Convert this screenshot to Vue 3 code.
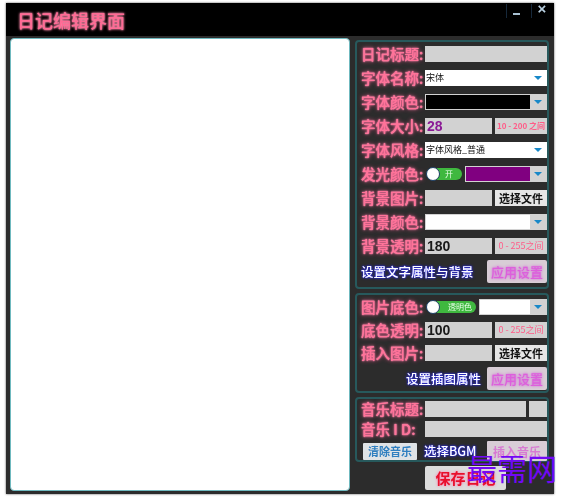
<script setup>
const title = '日记编辑界面'
</script>

<template>
  <div class="page">
    <div class="window">
      <header class="titlebar">
        <h1 class="title">{{ title }}</h1>
        <div class="controls">
          <span class="ctl min"></span>
          <span class="ctl close">×</span>
        </div>
      </header>
      <div class="body">
        <div class="editor"></div>
        <aside class="side">
          <section class="panel p1">
            <div class="row"><label>日记标题:</label><div class="field grow"></div></div>
            <div class="row"><label>字体名称:</label><div class="select grow"><span class="val">宋体</span><i class="arrow"></i></div></div>
            <div class="row"><label>字体颜色:</label><div class="cselect grow"><span class="swatch black"></span><i class="arrow"></i></div></div>
            <div class="row"><label>字体大小:</label><div class="field w67 num purple">28</div><div class="note boldnote">10 - 200 之间</div></div>
            <div class="row"><label>字体风格:</label><div class="select grow"><span class="val">字体风格_普通</span><i class="arrow"></i></div></div>
            <div class="row"><label>发光颜色:</label>
              <div class="toggle t1"><span class="knob"></span><span class="tlabel">开</span></div>
              <div class="cselect grow"><span class="swatch violet"></span><i class="arrow"></i></div>
            </div>
            <div class="row"><label>背景图片:</label><div class="field w67"></div><button class="file">选择文件</button></div>
            <div class="row"><label>背景颜色:</label><div class="cselect grow"><span class="swatch white"></span><i class="arrow"></i></div></div>
            <div class="row"><label>背景透明:</label><div class="field w67 num">180</div><div class="note">0 - 255之间</div></div>
            <div class="row action"><span class="blue">设置文字属性与背景</span><button class="apply">应用设置</button></div>
          </section>
          <section class="panel p2">
            <div class="row"><label>图片底色:</label>
              <div class="toggle t2"><span class="knob"></span><span class="tlabel">透明色</span></div>
              <div class="cselect grow"><span class="swatch white"></span><i class="arrow"></i></div>
            </div>
            <div class="row"><label>底色透明:</label><div class="field w67 num">100</div><div class="note">0 - 255之间</div></div>
            <div class="row"><label>插入图片:</label><div class="field w67"></div><button class="file">选择文件</button></div>
            <div class="row action end"><span class="blue">设置插图属性</span><button class="apply">应用设置</button></div>
          </section>
          <section class="panel p3">
            <div class="row"><label>音乐标题:</label><div class="field grow"></div><div class="field w18"></div></div>
            <div class="row"><label>音乐 I D:</label><div class="field grow"></div></div>
            <div class="row music">
              <button class="clear">清除音乐</button>
              <span class="blue bgm">选择BGM</span>
              <button class="insert">插入音乐</button>
            </div>
          </section>
          <div class="savebar"><button class="save">保存日记</button></div>
        </aside>
      </div>
    </div>
    <div class="mark">最需网</div>
  </div>
</template>

<style scoped>
.page {
  position: relative;
  width: 577px;
  height: 499px;
  background: #fff;
  padding: 3px 0 0 6px;
  box-sizing: border-box;
  overflow: hidden;
  font-family: "Noto Sans CJK SC", "Liberation Sans", sans-serif;
}
.window {
  width: 548px;
  height: 491px;
  background: #2c2c2c;
  display: flex;
  flex-direction: column;
  box-shadow: 0 0 2px #555;
  filter: blur(0.5px);
}
.titlebar {
  height: 33px;
  flex: none;
  background: #000;
  display: flex;
  justify-content: space-between;
  box-sizing: border-box;
  padding: 7px 2px 0 11px;
}
.title {
  margin: 0;
  font-size: 18px;
  line-height: 20px;
  font-weight: 500;
  color: #ff6a94;
  text-shadow: 0 0 2px #ffa8c2, 0 0 3px #ff6a94;
}
.controls {
  display: flex;
  margin-top: -6px;
  height: 14px;
}
.ctl {
  width: 20px;
  height: 14px;
  display: block;
  border-left: 1px solid #16283a;
  color: #b8cfe0;
  font: 700 15px/10px "Liberation Sans", sans-serif;
  text-align: center;
  position: relative;
}
.min { margin-right: 4px; }
.min::after {
  content: "";
  position: absolute;
  left: 6px;
  top: 9px;
  width: 7px;
  height: 2px;
  background: #a9c0d2;
}
.body {
  flex: 1;
  display: flex;
  padding: 2px 4px 3px 4px;
  gap: 5px;
  min-height: 0;
}
.editor {
  width: 340px;
  background: #fff;
  border: 1px solid #6fb9bf;
  border-radius: 4px;
  box-sizing: border-box;
}
.side {
  width: 194px;
  display: flex;
  flex-direction: column;
  gap: 4px;
  padding-top: 2px;
}
.panel {
  border: 2px solid #27595c;
  border-radius: 4px;
  box-sizing: border-box;
  padding: 4px 0 0 4px;
  display: flex;
  flex-direction: column;
  gap: 8px;
}
.p1 { height: 249px; }
.p2 { height: 100px; gap: 7px; }
.p3 { height: 65px; gap: 4px; padding-top: 2px; }
.row {
  display: flex;
  align-items: center;
  height: 16px;
  gap: 3px;
}
label {
  width: 61px;
  flex: none;
  font-size: 14.5px;
  line-height: 16px;
  white-space: nowrap;
  font-weight: 500;
  color: #ff7399;
  text-shadow: 0 0 4px #f0558a, 0 0 2px #ff8fb0, 0 0 1px #ffa6c0;
}
.field {
  height: 16px;
  background: #d2d2d2;
  box-sizing: border-box;
  font-size: 14px;
}
.grow { flex: 1; min-width: 0; }
.w67 { width: 67px; flex: none; }
.w18 { width: 18px; flex: none; }
.num {
  font: 700 14px/16px "Liberation Sans", sans-serif;
  padding-left: 2px;
  color: #1a1a1a;
}
.purple { color: #8b1a96; }
.note {
  flex: 1;
  height: 16px;
  background: #d2d2d2;
  color: #ff5c88;
  font: 400 9px/15px "Noto Sans CJK SC", "Liberation Sans", sans-serif;
  text-align: center;
  white-space: nowrap;
  overflow: hidden;
}
.boldnote { font-weight: 700; font-size: 8px; }
.select {
  height: 16px;
  background: #fff;
  display: flex;
  align-items: center;
  justify-content: space-between;
  padding-right: 5px;
  box-sizing: border-box;
}
.val {
  font-size: 9px;
  line-height: 16px;
  color: #111;
  padding-left: 1px;
}
.cselect {
  height: 16px;
  background: #d2d2d2;
  display: flex;
  align-items: center;
  justify-content: space-between;
  padding: 1px 5px 1px 1px;
  box-sizing: border-box;
}
.swatch {
  height: 100%;
  flex: 1;
  margin-right: 4px;
}
.black { background: #000; }
.violet { background: #800080; }
.white { background: #fff; }
.arrow {
  width: 0;
  height: 0;
  flex: none;
  border-left: 4px solid transparent;
  border-right: 4px solid transparent;
  border-top: 4px solid #1788c8;
}
.toggle {
  height: 12px;
  border-radius: 6px;
  background: #3fb83f;
  position: relative;
  flex: none;
  margin-left: 2px;
  display: flex;
  align-items: center;
  justify-content: flex-end;
}
.t1 { width: 35px; }
.t2 { width: 49px; }
.knob {
  position: absolute;
  left: -1px;
  top: -1px;
  width: 12px;
  height: 12px;
  border-radius: 50%;
  background: #fff;
  border: 1px solid #1d3f66;
}
.tlabel {
  color: #e8ffe8;
  font-size: 8px;
  line-height: 12px;
  padding-right: 4px;
}
.t1 .tlabel { padding-right: 9px; }
button {
  font-family: inherit;
  padding: 0;
  cursor: pointer;
  border: 0;
}
.file {
  width: 52px;
  height: 16px;
  flex: none;
  background: #e6e6e6;
  color: #111;
  font-size: 11px;
  font-weight: 700;
  line-height: 16px;
}
.action {
  height: 23px;
  justify-content: space-between;
  margin-top: -2px;
}
.p2 .action { margin-top: -1px; }
.end { justify-content: flex-end; gap: 6px; }
.blue {
  color: #fff;
  font-size: 12.5px;
  font-weight: 500;
  line-height: 16px;
  text-shadow: 0 0 2px #2a2ae0, 0 0 3px #2a2ae0, 0 0 1px #2a2ae0;
  white-space: nowrap;
}
.apply {
  width: 60px;
  height: 23px;
  background: #d8cdd6;
  border-radius: 2px;
  color: #dd5fdc;
  font-size: 13px;
  font-weight: 500;
  text-shadow: 0 0 3px #d24bd8;
}
.music { gap: 0; padding-left: 2px; height: 20px; }
.clear {
  width: 54px;
  height: 17px;
  background: #dfe3e6;
  color: #2f7fc0;
  font-size: 11px;
  font-weight: 700;
  border-radius: 1px;
}
.bgm { margin-left: 7px; }
.insert {
  width: 60px;
  height: 20px;
  margin-left: auto;
  background: #d8cdd6;
  color: #d77ad2;
  font-size: 12px;
  font-weight: 700;
  border-radius: 1px;
}
.savebar {
  padding: 0 0 0 70px;
  margin-top: -1px;
}
.save {
  width: 81px;
  height: 24px;
  background: #dcdcdc;
  border-radius: 2px;
  color: #e8102c;
  font-size: 15px;
  font-weight: 700;
  text-shadow: 0 0 3px #ff70a8;
}
.mark {
  position: absolute;
  left: 467px;
  top: 450px;
  font-size: 30px;
  line-height: 34px;
  font-weight: 400;
  color: #7208f5;
  white-space: nowrap;
  font-family: "Noto Sans CJK SC", sans-serif;
}
</style>
